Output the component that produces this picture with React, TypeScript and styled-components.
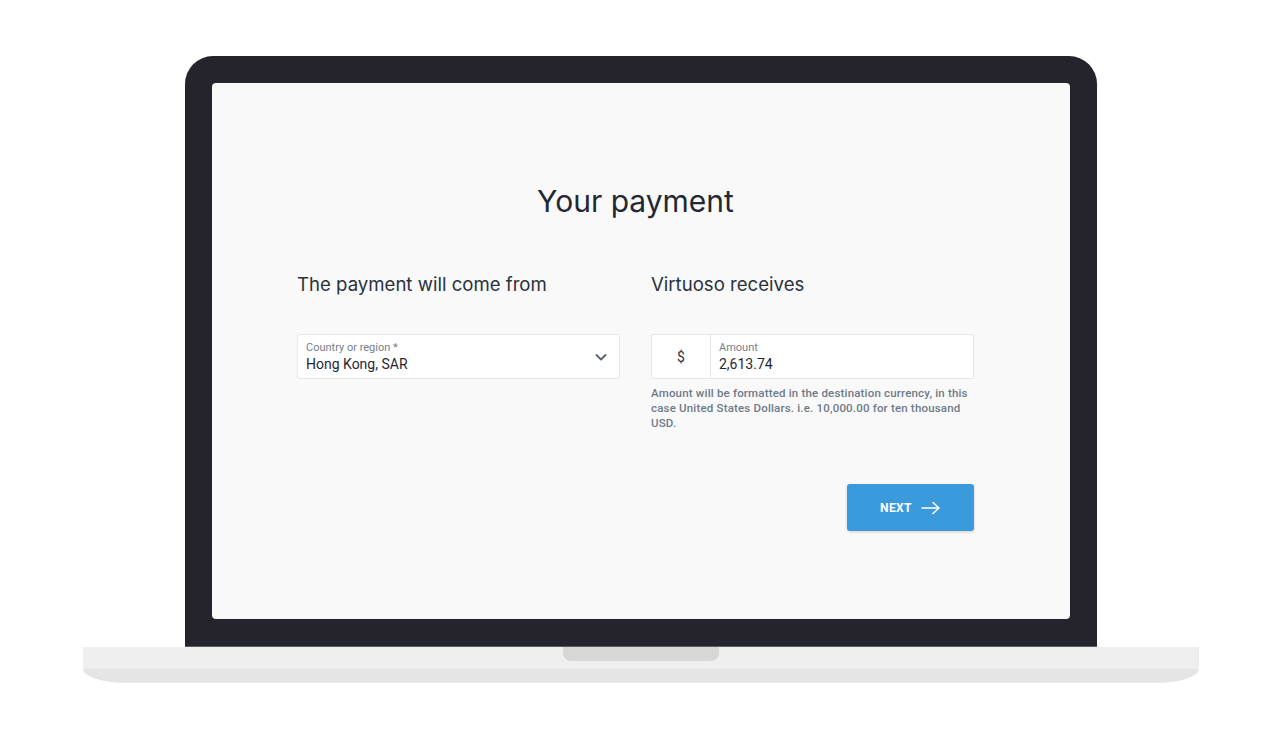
import React from "react";
import styled, { createGlobalStyle } from "styled-components";

const Global = createGlobalStyle`
  html, body { margin: 0; padding: 0; background: #ffffff; }
  body { font-family: "Roboto", "Liberation Sans", sans-serif; }
  * { box-sizing: border-box; }
`;

const Page = styled.div`
  width: 1280px;
  height: 741px;
  display: flex;
  flex-direction: column;
  align-items: center;
  padding-top: 56px;
  padding-left: 2px;
  background: #ffffff;
`;

const Lid = styled.div`
  width: 912px;
  height: 591px;
  background: #25242d;
  border-radius: 28px 28px 0 0;
  padding: 27px 27px 27px;
  border-bottom: 1px solid #5c5b63;
`;

const Screen = styled.div`
  width: 100%;
  height: 100%;
  background: #f9f9f9;
  border-radius: 4px;
  display: flex;
  flex-direction: column;
  align-items: center;
  padding: 100px 96px 0 85px;
`;

const Title = styled.h1`
  margin: 0;
  font-family: "Inter", "Liberation Sans", sans-serif;
  font-weight: 400;
  font-size: 30px;
  line-height: 36px;
  color: #1f2833;
  letter-spacing: 0;
`;

const Columns = styled.div`
  margin-top: 53px;
  display: grid;
  grid-template-columns: 323px 323px;
  column-gap: 31px;
`;

const Column = styled.div`
  display: flex;
  flex-direction: column;
`;

const Heading = styled.h2`
  margin: 0;
  font-family: "Inter", "Liberation Sans", sans-serif;
  font-weight: 400;
  font-size: 18.6px;
  line-height: 24px;
  color: #2a323c;
`;

const Field = styled.div`
  margin-top: 38px;
  height: 45px;
  background: #ffffff;
  border: 1px solid #e4e7ea;
  border-radius: 2px;
  display: flex;
  align-items: stretch;
`;

const Prefix = styled.div`
  width: 59px;
  border-right: 1px solid #e4e7ea;
  display: flex;
  align-items: center;
  justify-content: center;
  font-size: 14px;
  color: #2b333d;
`;

const FieldBody = styled.div<{ $pad: number }>`
  flex: 1;
  display: flex;
  flex-direction: column;
  justify-content: center;
  padding-left: ${(p) => p.$pad}px;
`;

const Label = styled.div`
  font-size: 11px;
  line-height: 13px;
  color: #76818e;
`;

const Value = styled.div`
  font-size: 14px;
  line-height: 18px;
  color: #1f2833;
  margin-top: 1px;
`;

const Chevron = styled.div`
  width: 36px;
  display: flex;
  align-items: center;
  justify-content: center;
  color: #56626f;
`;

const Help = styled.p`
  margin: 7px 0 0;
  font-size: 11.5px;
  line-height: 15px;
  font-weight: 500;
  letter-spacing: 0.18px;
  color: #6d7a89;
`;

const Footer = styled.div`
  width: 677px;
  margin-top: 53px;
  display: flex;
  justify-content: flex-end;
`;

const NextButton = styled.button`
  width: 127px;
  height: 47px;
  border: none;
  border-radius: 3px;
  background: #3b9adb;
  box-shadow: 0 1px 3px rgba(0, 0, 0, 0.18);
  color: #ffffff;
  font-family: "Roboto", "Liberation Sans", sans-serif;
  font-weight: 700;
  font-size: 12px;
  letter-spacing: 0.4px;
  display: flex;
  align-items: center;
  justify-content: center;
  gap: 9px;
  cursor: pointer;
`;

const Base = styled.div`
  width: 1116px;
  height: 36px;
  background: linear-gradient(#efefef 0, #efefef 22px, #e5e5e5 22px);
  border-radius: 0 0 45px 45px / 0 0 14px 14px;
  display: flex;
  justify-content: center;
`;

const Notch = styled.div`
  width: 156px;
  height: 14px;
  background: #d7d7d7;
  border-radius: 0 0 8px 8px;
`;

export default function App() {
  return (
    <>
      <Global />
      <Page>
        <Lid>
          <Screen>
            <Title>Your payment</Title>
            <Columns>
              <Column>
                <Heading>The payment will come from</Heading>
                <Field>
                  <FieldBody $pad={8}>
                    <Label>Country or region *</Label>
                    <Value>Hong Kong, SAR</Value>
                  </FieldBody>
                  <Chevron>
                    <svg width="14" height="14" viewBox="0 0 14 14" fill="none">
                      <path d="M2.5 5l4.5 4.5L11.5 5" stroke="currentColor" strokeWidth="1.8" strokeLinecap="round" strokeLinejoin="round" />
                    </svg>
                  </Chevron>
                </Field>
              </Column>
              <Column>
                <Heading>Virtuoso receives</Heading>
                <Field>
                  <Prefix>$</Prefix>
                  <FieldBody $pad={8}>
                    <Label>Amount</Label>
                    <Value>2,613.74</Value>
                  </FieldBody>
                </Field>
                <Help>
                  Amount will be formatted in the destination currency, in this case United States Dollars. i.e. 10,000.00 for ten thousand USD.
                </Help>
              </Column>
            </Columns>
            <Footer>
              <NextButton>
                NEXT
                <svg width="20" height="14" viewBox="0 0 20 14" fill="none">
                  <path d="M1 7h17M12 1.5L18 7l-6 5.5" stroke="#ffffff" strokeWidth="1.6" strokeLinecap="round" strokeLinejoin="round" />
                </svg>
              </NextButton>
            </Footer>
          </Screen>
        </Lid>
        <Base>
          <Notch />
        </Base>
      </Page>
    </>
  );
}
